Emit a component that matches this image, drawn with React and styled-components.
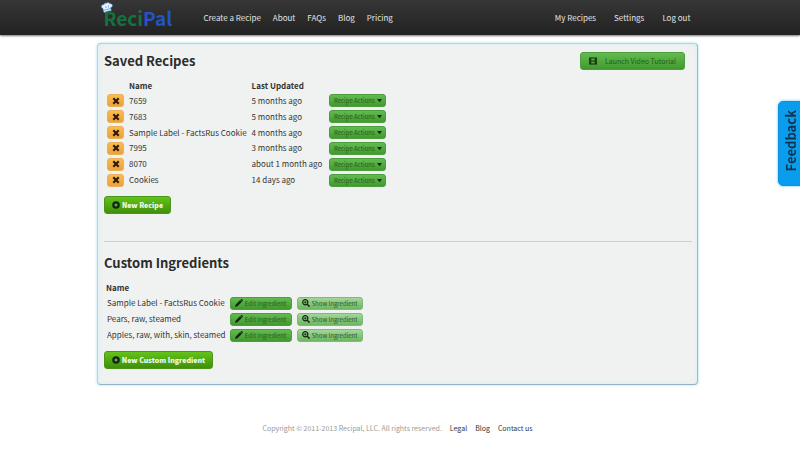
import React from "react";
import styled, { createGlobalStyle, css } from "styled-components";

const Global = createGlobalStyle`
  *, *::before, *::after { box-sizing: border-box; }
  body {
    margin: 0;
    background: #fff;
    color: #333;
    font-family: "Noto Sans CJK JP", "Noto Sans", sans-serif;
    font-size: 8px;
    line-height: 12px;
  }
  button { font: inherit; cursor: pointer; }
  a { text-decoration: none; }
`;

const TopBar = styled.header`
  height: 35px;
  padding-right: 5px;
  background: linear-gradient(#363636, #222);
  box-shadow: 0 1px 2px rgba(0, 0, 0, 0.55);
`;

const BarInner = styled.div`
  display: flex;
  align-items: center;
  max-width: 600px;
  height: 35px;
  margin: 0 auto;
  padding: 0 7px 0 3px;
`;

const Logo = styled.a`
  position: relative;
  width: 103px;
  padding-left: 3px;
  font-size: 19px;
  font-weight: 700;
  line-height: 34px;
  color: #17713f;
`;

const LogoBlue = styled.span`
  color: #2353c4;
`;

const HatIcon = styled.svg`
  position: absolute;
  left: 0;
  top: 0;
  width: 12px;
  height: 13px;
`;

const Nav = styled.nav`
  display: flex;
  gap: ${(p) => p.$gap}px;
  margin-left: ${(p) => (p.$end ? "auto" : "0")};
`;

const NavLink = styled.a`
  color: #e4e4e4;
  white-space: nowrap;
`;

const Page = styled.div`
  padding: 8px 5px 0 0;
`;

const Panel = styled.main`
  max-width: 601px;
  margin: 0 auto;
  padding: 8px 5px 15px 6px;
  background: #eff2f1;
  border: 1px solid #b5d3e0;
  border-right-color: #94bccc;
  border-bottom-color: #94b4c4;
  border-radius: 4px;
  box-shadow: 0 0 3px #a5dcee, inset 0 0 4px #d9edf5;
`;

const PanelHead = styled.div`
  display: flex;
  justify-content: space-between;
  padding-right: 7px;
`;

const Title = styled.h2`
  margin: 0;
  font-size: 13px;
  font-weight: 700;
  line-height: 18px;
  color: #2b2b2b;
`;

const Table = styled.table`
  border-collapse: collapse;
  height: ${(p) => p.$height}px;
  margin-top: ${(p) => p.$top}px;
`;

const Th = styled.th`
  height: 15px;
  padding: 0 4px 0 ${(p) => p.$left || 0}px;
  text-align: left;
  font-weight: 700;
  white-space: nowrap;
`;

const Td = styled.td`
  height: 15px;
  padding: 0 ${(p) => p.$gap || 5}px 0 0;
  white-space: nowrap;
  vertical-align: middle;

  &:first-child { padding-left: 3px; }
`;

const tones = {
  green: css`
    background: linear-gradient(#62bb50, #43992f);
    border-color: #4c9e3d;
    color: #215c18;
  `,
  pale: css`
    background: linear-gradient(#a1d698, #6cb761);
    border-color: #80ba78;
    color: #2b5528;
  `,
  vivid: css`
    background: linear-gradient(#63c31a, #418f0a);
    border-color: #4a9616;
    color: #f2fbe9;
  `,
  orange: css`
    background: linear-gradient(#fcbb50, #efa035);
    border-color: #eab05c;
    color: #2d1d05;
  `,
};

const Button = styled.button`
  display: flex;
  align-items: center;
  justify-content: center;
  gap: 2px;
  width: ${(p) => p.$width}px;
  height: 13px;
  padding: 0;
  border: 1px solid;
  border-radius: 3px;
  font-size: 6px;
  line-height: 11px;
  white-space: nowrap;
  ${(p) => tones[p.$tone]}
`;

const LargeButton = styled(Button)`
  height: 18px;
  gap: ${(p) => p.$gap || 2}px;
  font-size: 7px;
  font-weight: ${(p) => (p.$bold ? 900 : 400)};
  margin-top: ${(p) => p.$top || 0}px;
`;

const Icon = styled.svg`
  flex: none;
  width: ${(p) => p.$size || 8}px;
  height: ${(p) => p.$size || 8}px;
  color: #10290c;
`;

const Rule = styled.hr`
  margin: 27px 0 12px;
  border: 0;
  border-top: 1px solid #ccd0d0;
`;

const Footer = styled.footer`
  display: flex;
  justify-content: center;
  gap: 8px;
  padding-top: 37px;
  font-size: 7px;
  color: #999;
`;

const FooterLink = styled.a`
  color: #333;
`;

const Feedback = styled.button`
  position: fixed;
  top: 101px;
  right: -4px;
  display: flex;
  align-items: center;
  justify-content: center;
  width: 26px;
  height: 85px;
  padding: 0 0 6px;
  border: 1px solid #0b91dc;
  border-radius: 5px;
  background: #0b9ded;
  box-shadow: 0 0 3px #65bfec;
  color: #12334a;
  font-size: 13px;
  font-weight: 700;
  line-height: 22px;
`;

const FeedbackText = styled.span`
  display: block;
  writing-mode: vertical-rl;
  transform: rotate(180deg);
`;

const Cross = () => (
  <Icon viewBox="0 0 8 8" aria-hidden="true">
    <path d="M1.3 1.3 6.7 6.7M6.7 1.3 1.3 6.7" stroke="#2d1d05" strokeWidth="2.2" />
  </Icon>
);

const Caret = () => (
  <Icon $size={5} viewBox="0 0 5 5" aria-hidden="true">
    <path d="M0 1h5L2.5 4.2z" fill="currentColor" />
  </Icon>
);

const Plus = () => (
  <Icon viewBox="0 0 8 8" aria-hidden="true">
    <circle cx="4" cy="4" r="3.8" fill="currentColor" />
    <path d="M4 2.4v3.2M2.4 4h3.2" stroke="#83c55a" strokeWidth="1.1" />
  </Icon>
);

const Pencil = () => (
  <Icon viewBox="0 0 8 8" aria-hidden="true">
    <path d="M0 8 .7 5.5 5.2 1 7 2.8 2.5 7.3zM5.6.6 6.2 0Q6.6-.2 7 .2L7.8 1q.4.4 0 .8l-.5.6z" fill="currentColor" />
  </Icon>
);

const ZoomIn = () => (
  <Icon viewBox="0 0 8 8" aria-hidden="true">
    <circle cx="3.3" cy="3.3" r="2.6" fill="none" stroke="currentColor" strokeWidth="1.2" />
    <path d="M3.3 2v2.6M2 3.3h2.6" stroke="currentColor" strokeWidth=".8" />
    <path d="m5.2 5.2 2.4 2.4" stroke="currentColor" strokeWidth="1.5" />
  </Icon>
);

const Film = () => (
  <Icon viewBox="0 0 8 8" aria-hidden="true">
    <path fillRule="evenodd" d="M0 .5h8v7H0zM2.2 1.5v2h3.6v-2zM2.2 4.5v2h3.6v-2zM.6 1.4v.8h.8v-.8zM.6 3.6v.8h.8v-.8zM.6 5.8v.8h.8v-.8zM6.6 1.4v.8h.8v-.8zM6.6 3.6v.8h.8v-.8zM6.6 5.8v.8h.8v-.8z" fill="currentColor" />
  </Icon>
);

const recipes = [
  ["7659", "5 months ago"],
  ["7683", "5 months ago"],
  ["Sample Label - FactsRus Cookie", "4 months ago"],
  ["7995", "3 months ago"],
  ["8070", "about 1 month ago"],
  ["Cookies", "14 days ago"],
];

const ingredients = [
  "Sample Label - FactsRus Cookie",
  "Pears, raw, steamed",
  "Apples, raw, with, skin, steamed",
];

export default function App() {
  return (
    <>
      <Global />
      <TopBar>
        <BarInner>
          <Logo href="#">
            <HatIcon viewBox="0 0 12 13" aria-hidden="true">
              <path d="M3 11.5 2 7.5Q0 7 .6 4.8 1 3.2 3 3.8 3.4 1.6 5.5 2.2 7.4.8 8.8 2.8q2.6-.4 2.6 1.6 0 1.9-1.8 2.2l.6 3.2Q7 9.5 3 11.5z" fill="#e8f3ff" stroke="#5996de" strokeWidth=".6" />
              <path d="m3 9.2 6.8-1.7M4.6 5l.6 2M7.4 4.5l.2 2" stroke="#4a83cc" strokeWidth=".7" />
            </HatIcon>
            Reci<LogoBlue>Pal</LogoBlue>
          </Logo>
          <Nav $gap={12} aria-label="Main">
            {["Create a Recipe", "About", "FAQs", "Blog", "Pricing"].map((t) => (
              <NavLink key={t} href="#">{t}</NavLink>
            ))}
          </Nav>
          <Nav $gap={18} $end aria-label="Account">
            {["My Recipes", "Settings", "Log out"].map((t) => (
              <NavLink key={t} href="#">{t}</NavLink>
            ))}
          </Nav>
        </BarInner>
      </TopBar>
      <Page>
        <Panel>
          <PanelHead>
            <Title>Saved Recipes</Title>
            <LargeButton $tone="green" $width={105} $gap={8}><Film />Launch Video Tutorial</LargeButton>
          </PanelHead>
          <Table $top={8} $height={110}>
            <thead>
              <tr>
                <Th aria-label="Delete" />
                <Th>Name</Th>
                <Th>Last Updated</Th>
                <Th aria-label="Actions" />
              </tr>
            </thead>
            <tbody>
              {recipes.map(([name, updated]) => (
                <tr key={name}>
                  <Td><Button $tone="orange" $width={17} aria-label={`Delete ${name}`}><Cross /></Button></Td>
                  <Td>{name}</Td>
                  <Td $gap={7}>{updated}</Td>
                  <Td><Button $tone="green" $width={57}>Recipe Actions<Caret /></Button></Td>
                </tr>
              ))}
            </tbody>
          </Table>
          <LargeButton $tone="vivid" $width={67} $top={8} $bold><Plus />New Recipe</LargeButton>
          <Rule />
          <Title>Custom Ingredients</Title>
          <Table $top={8} $height={63}>
            <thead>
              <tr>
                <Th $left={2}>Name</Th>
                <Th aria-label="Edit" />
                <Th aria-label="Show" />
              </tr>
            </thead>
            <tbody>
              {ingredients.map((name) => (
                <tr key={name}>
                  <Td $gap={4}>{name}</Td>
                  <Td><Button $tone="green" $width={62}><Pencil />Edit Ingredient</Button></Td>
                  <Td><Button $tone="pale" $width={66}><ZoomIn />Show Ingredient</Button></Td>
                </tr>
              ))}
            </tbody>
          </Table>
          <LargeButton $tone="vivid" $width={109} $top={8} $bold><Plus />New Custom Ingredient</LargeButton>
        </Panel>
        <Footer>
          <span>Copyright © 2011-2013 Recipal, LLC. All rights reserved.</span>
          {["Legal", "Blog", "Contact us"].map((t) => (
            <FooterLink key={t} href="#">{t}</FooterLink>
          ))}
        </Footer>
      </Page>
      <Feedback><FeedbackText>Feedback</FeedbackText></Feedback>
    </>
  );
}
